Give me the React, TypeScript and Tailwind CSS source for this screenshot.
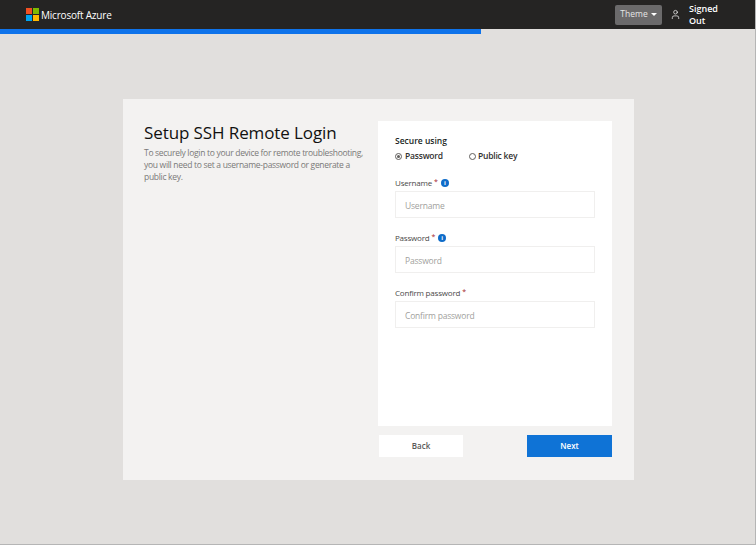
import { User } from "lucide-react";

function MicrosoftLogo() {
  return (
    <svg width="13" height="13" viewBox="0 0 13 13" className="shrink-0">
      <rect x="0" y="0" width="6" height="6" fill="#f25022" />
      <rect x="7" y="0" width="6" height="6" fill="#7fba00" />
      <rect x="0" y="7" width="6" height="6" fill="#00a4ef" />
      <rect x="7" y="7" width="6" height="6" fill="#ffb900" />
    </svg>
  );
}

function InfoDot() {
  return (
    <span className="flex w-[8px] h-[8px] items-center justify-center rounded-full bg-[#0f6cc9] text-white text-[6px] leading-none font-bold">
      i
    </span>
  );
}

function Field({
  label,
  info,
  className,
}: {
  label: string;
  info?: boolean;
  className: string;
}) {
  return (
    <div className={className}>
      <div className="flex items-center gap-[2px] h-[12px] pt-[1px] text-[8px] tracking-[-0.2px] text-[#4a4948]">
        <span>{label}</span>
        <span className="text-[#a4262c] text-[7px] mr-[1px]">*</span>
        {info && <InfoDot />}
      </div>
      <input
        readOnly
        placeholder={label}
        className="mt-[3px] w-[200px] h-[27px] px-[9px] pt-[1px] bg-white border border-[#f0efee] text-[8.5px] tracking-[-0.2px] outline-none placeholder:text-[#a19f9d]"
      />
    </div>
  );
}

export default function App() {
  return (
    <div className="h-[545px] w-[756px] flex flex-col bg-[#e1dfdd] border-r border-b border-[#b5b5b5] font-['Open_Sans',sans-serif] overflow-hidden">
      {/* Header */}
      <div className="h-[29px] shrink-0 flex items-center bg-[#252423] text-white">
        <div className="flex items-center gap-[2px] ml-[26px]">
          <MicrosoftLogo />
          <span className="text-[10px] tracking-[-0.2px] leading-none">Microsoft Azure</span>
        </div>
        <div className="ml-auto flex items-center">
          <div className="flex items-center gap-[3px] w-[47px] h-[20px] justify-center rounded-[2px] bg-[#6b6a6b] text-[#e6e6e6] text-[8.5px]">
            Theme
            <span className="w-0 h-0 border-x-[3px] border-x-transparent border-t-[3px] border-t-white" />
          </div>
          <User className="ml-[8px] w-[11px] h-[11px] text-white" strokeWidth={1.5} />
          <div className="ml-[8px] w-[66px] pr-[36px] text-[9px] font-semibold leading-[12px]">
            Signed Out
          </div>
        </div>
      </div>

      {/* Progress */}
      <div className="h-[5px] shrink-0">
        <div className="h-full w-[481px] bg-[#0f73ea]" />
      </div>

      {/* Card */}
      <div className="w-[511px] h-[381px] mt-[65px] ml-[123px] flex bg-[#f3f2f1] pl-[21px] pt-[22px]">
        <div className="w-[234px]">
          <h1 className="text-[17px] tracking-[-0.1px] leading-[24px] text-[#111110]">
            Setup SSH Remote Login
          </h1>
          <p className="mt-[2px] w-[225px] text-[8.5px] tracking-[-0.3px] leading-[12px] text-[#7a7978]">
            To securely login to your device for remote troubleshooting, you will need to set a
            username-password or generate a public key.
          </p>
        </div>
        <div className="w-[234px]">
          <div className="h-[305px] bg-white pl-[17px] pt-[14px]">
            <div className="text-[8.5px] font-semibold leading-[12px] text-[#201f1e]">Secure using</div>
            <div className="flex items-center mt-[3px] h-[12px] text-[8.5px] tracking-[-0.2px] font-semibold text-[#323130]">
              <span className="flex items-center justify-center w-[7px] h-[7px] rounded-full border border-[#605e5c]">
                <span className="w-[3px] h-[3px] rounded-full bg-[#605e5c]" />
              </span>
              <span className="ml-[3px]">Password</span>
              <span className="ml-[26px] w-[7px] h-[7px] rounded-full border border-[#605e5c]" />
              <span className="ml-[2px]">Public key</span>
            </div>
            <Field label="Username" info className="mt-[14px]" />
            <Field label="Password" info className="mt-[13px]" />
            <Field label="Confirm password" className="mt-[13px]" />
          </div>
          <div className="flex justify-between mt-[9px]">
            <button className="ml-px w-[84px] h-[22px] bg-white text-[8px] font-semibold text-[#5a5958]">
              Back
            </button>
            <button className="w-[85px] h-[22px] bg-[#0f73d6] text-[8px] font-semibold text-white">
              Next
            </button>
          </div>
        </div>
      </div>
    </div>
  );
}
